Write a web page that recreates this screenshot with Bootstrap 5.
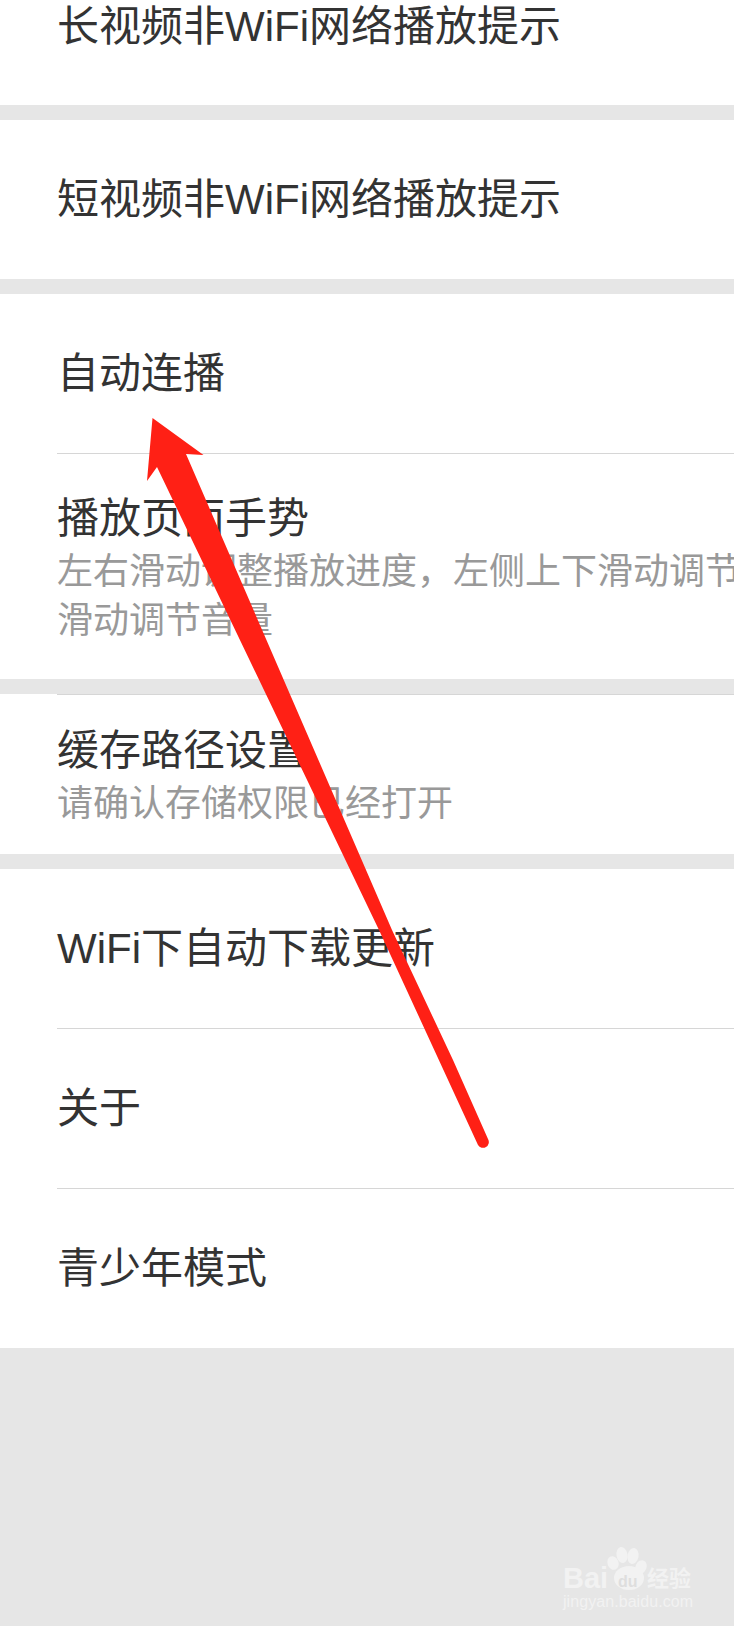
<!DOCTYPE html>
<html lang="zh-CN">
<head>
  <meta charset="UTF-8">
  <meta name="viewport" content="width=device-width, initial-scale=1.0">
  <title>设置</title>
  <link href="https://cdn.jsdelivr.net/npm/bootstrap@5.3.3/dist/css/bootstrap.min.css" rel="stylesheet">
  <style>
    body {
      background-color: #e6e6e6;
      font-family: "Liberation Sans", "Noto Sans CJK SC", sans-serif;
      width: 734px;
      height: 1626px;
      overflow: hidden;
      position: relative;
    }
    .set-group { background-color: #fff; margin-bottom: 15px; }
    .set-group:last-of-type { margin-bottom: 0; }
    .set-row {
      height: 160px;
      margin-left: 57px;
      border-bottom: 1px solid #d6d6d6;
      color: #333;
      font-size: 42px;
      line-height: 50px;
      white-space: nowrap;
    }
    .set-group .set-row:last-child { border-bottom: 0; }
    .set-first { height: 105px; padding-bottom: 52px; line-height: 46px; }
    .set-second { height: 159px; }
    .set-tall { height: 225px; padding-top: 40px; }
    .set-mid { padding-top: 31px; border-top: 1px solid #d6d6d6; }
    .set-last { height: 159px; }
    .set-sub { color: #999; font-size: 36px; line-height: 49px; margin-top: 3px; }
    .arrow-mark { position: absolute; left: 0; top: 0; pointer-events: none; }
    .wm-box { position: absolute; left: 560px; top: 1543px; }
  </style>
</head>
<body>
  <div class="set-group">
    <div class="set-row set-first d-flex align-items-center">长视频非WiFi网络播放提示</div>
  </div>
  <div class="set-group">
    <div class="set-row set-second d-flex align-items-center">短视频非WiFi网络播放提示</div>
  </div>
  <div class="set-group">
    <div class="set-row d-flex align-items-center">自动连播</div>
    <div class="set-row set-tall">
      <div>播放页面手势</div>
      <div class="set-sub">左右滑动调整播放进度，左侧上下滑动调节亮度，右侧上下<br>滑动调节音量</div>
    </div>
  </div>
  <div class="set-group">
    <div class="set-row set-mid">
      <div>缓存路径设置</div>
      <div class="set-sub">请确认存储权限已经打开</div>
    </div>
  </div>
  <div class="set-group">
    <div class="set-row d-flex align-items-center">WiFi下自动下载更新</div>
    <div class="set-row d-flex align-items-center">关于</div>
    <div class="set-row set-last d-flex align-items-center">青少年模式</div>
  </div>

  <!-- red arrow drawn over the list -->
  <svg class="arrow-mark" width="734" height="1626" viewBox="0 0 734 1626">
    <path d="M152.5 418 L203.5 455 L186 454 L392 930 L453 1060 L488 1139 A5.5 5.5 0 0 1 478 1145 L379 930 L157 467 L147 481 Z" fill="#ff2015"/>
  </svg>

  <!-- watermark -->
  <svg class="wm-box" width="140" height="70" viewBox="560 1543 140 70">
    <g fill="#f2f2f2">
      <ellipse cx="613" cy="1563" rx="5.5" ry="7" transform="rotate(-20 613 1563)"/>
      <ellipse cx="622" cy="1555" rx="5.5" ry="8" transform="rotate(-10 622 1555)"/>
      <ellipse cx="633" cy="1556" rx="5.5" ry="8" transform="rotate(10 633 1556)"/>
      <ellipse cx="641" cy="1567" rx="5.5" ry="7" transform="rotate(25 641 1567)"/>
      <ellipse cx="629" cy="1578" rx="15" ry="12"/>
    </g>
    <text x="563" y="1588" font-family="'Liberation Sans', sans-serif" font-size="29" font-weight="700" fill="#f2f2f2">Bai</text>
    <text x="618" y="1587" font-family="'Liberation Sans', sans-serif" font-size="16" font-weight="700" fill="#dedede">du</text>
    <text x="647" y="1586" font-family="'Noto Sans CJK SC', sans-serif" font-size="22" font-weight="700" fill="#f2f2f2">经验</text>
    <text x="563" y="1607" font-family="'Liberation Sans', sans-serif" font-size="16" fill="#f2f2f2" textLength="130">jingyan.baidu.com</text>
  </svg>

  <script src="https://cdn.jsdelivr.net/npm/bootstrap@5.3.3/dist/js/bootstrap.bundle.min.js"></script>
</body>
</html>
